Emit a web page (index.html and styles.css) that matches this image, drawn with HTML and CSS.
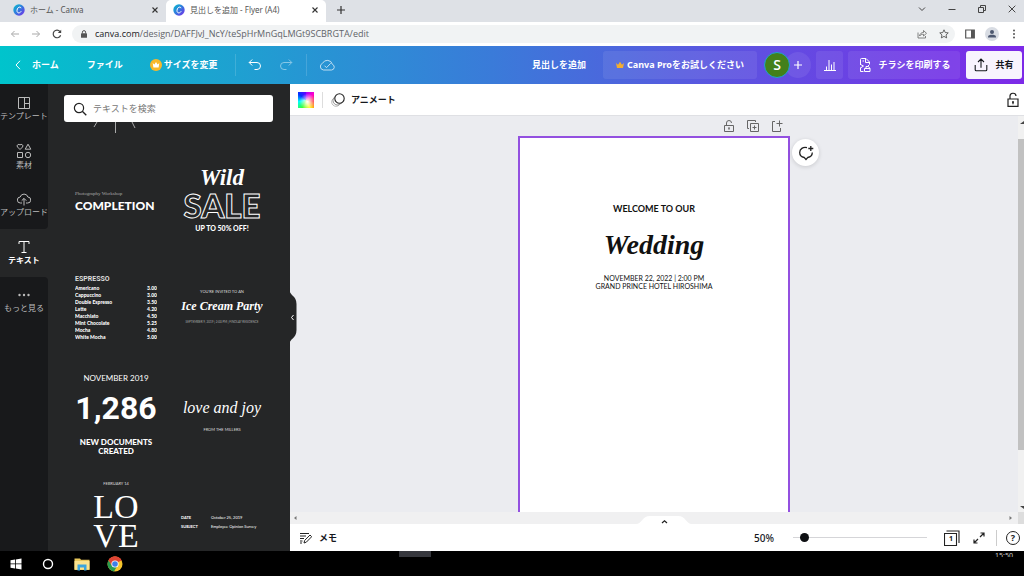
FILE: index.html
```html
<!DOCTYPE html>
<html lang="ja">
<head>
<meta charset="utf-8">
<title>見出しを追加 - Flyer (A4)</title>
<link rel="stylesheet" href="styles.css">
</head>
<body>
<div class="screen">
  <div class="tabs">
    <div class="tab">
      <svg class="fav" viewBox="0 0 12 12"><defs><linearGradient id="cg" x1="0" y1="0" x2="1" y2="1"><stop offset="0" stop-color="#00c4cc"/><stop offset=".55" stop-color="#3a6fe0"/><stop offset="1" stop-color="#7d2ae8"/></linearGradient></defs><circle cx="6" cy="6" r="5.7" fill="url(#cg)"/><path d="M8 4.2C7.8 2.9 6.300 2.700 5.200 3.700C3.800 5 3.500 7.800 4.900 8.700C6 9.300 7.400 8.600 8.200 7.300" fill="none" stroke="#fff" stroke-width="1"/></svg>
      <span class="tab-title">ホーム - Canva</span>
      <button class="plain" aria-label="タブを閉じる"><svg class="i6" viewBox="0 0 6 6"><path d="M.5.500l5 5M5.500.500l-5 5" stroke="#333" stroke-width="1.100"/></svg></button>
    </div>
    <div class="tab tab-on">
      <svg class="fav" viewBox="0 0 12 12"><circle cx="6" cy="6" r="5.700" fill="url(#cg)"/><path d="M8 4.200C7.800 2.900 6.300 2.700 5.200 3.700C3.800 5 3.500 7.800 4.900 8.700C6 9.300 7.400 8.600 8.200 7.300" fill="none" stroke="#fff" stroke-width="1"/></svg>
      <span class="tab-title">見出しを追加 - Flyer (A4)</span>
      <button class="plain" aria-label="タブを閉じる"><svg class="i6" viewBox="0 0 6 6"><path d="M.5.500l5 5M5.500.500l-5 5" stroke="#333" stroke-width="1.100"/></svg></button>
    </div>
    <button class="plain new-tab" aria-label="新しいタブ"><svg class="i8" viewBox="0 0 8 8"><path d="M4 0v8M0 4h8" stroke="#333" stroke-width="1.200"/></svg></button>
    <div class="win">
      <svg class="i8" viewBox="0 0 8 8"><path d="M1 2.500l3 3 3-3" class="ln"/></svg>
      <svg class="i8" viewBox="0 0 8 8"><path d="M.5 4.500h7" class="ln"/></svg>
      <svg class="i8" viewBox="0 0 8 8"><path d="M.5 2.500h5v5h-5zM2.500 2.500V.500h5v5H5.500" class="ln"/></svg>
      <svg class="i8" viewBox="0 0 8 8"><path d="M.7.700l6.600 6.600M7.300.700L.7 7.300" class="ln"/></svg>
    </div>
  </div>

  <div class="address">
    <div class="nav">
      <svg class="i10 faint" viewBox="0 0 10 10"><path d="M9 5H1.500M4.500 2L1.500 5l3 3" class="ln"/></svg>
      <svg class="i10 faint" viewBox="0 0 10 10"><path d="M1 5h7.500M5.500 2l3 3-3 3" class="ln"/></svg>
      <svg class="i10" viewBox="0 0 10 10"><path d="M8.600 6.200A3.800 3.800 0 1 1 8 2.600" fill="none" stroke="#444" stroke-width="1.200"/><path d="M9.200.700v3.400H5.800z" fill="#444"/></svg>
    </div>
    <div class="omni">
      <svg class="i8" viewBox="0 0 8 8"><rect x="1" y="3.200" width="6" height="4.600" rx=".6" fill="#555"/><path d="M2.400 3.500V2.200a1.600 1.600 0 0 1 3.200 0v1.300" fill="none" stroke="#555"/></svg>
      <span class="url"><b>canva.com</b>/design/DAFFJvJ_NcY/teSpHrMnGqLMGt9SCBRGTA/edit</span>
      <svg class="i10" viewBox="0 0 10 10"><path d="M1 3.500V9h7.500V7M2.500 7C3 4.500 4.500 3.500 6.500 3.500V1.500L9.500 4.300 6.500 7V5.300C4.800 5.300 3.500 5.700 2.500 7z" fill="none" stroke="#666" stroke-width=".8"/></svg>
      <svg class="i10 star" viewBox="0 0 10 10"><path d="M5 .8l1.250 2.750 3 .35-2.200 2.050.6 2.950L5 7.400 2.350 8.900l.6-2.950L.75 3.900l3-.35z" fill="none" stroke="#555" stroke-width=".9"/></svg>
    </div>
    <svg class="i10" viewBox="0 0 10 10"><path d="M.7 1h8.600v8H.7z" fill="none" stroke="#555" stroke-width="1.200"/><path d="M6 1h3.300v8H6z" fill="#555"/></svg>
    <svg class="i14" viewBox="0 0 14 14"><circle cx="7" cy="7" r="7" fill="#d8dce3"/><circle cx="7" cy="5" r="2" fill="#4d5870"/><path d="M3 10.500V9.600C3 8.300 5 7.800 7 7.800s4 .5 4 1.800v.9z" fill="#4d5870"/></svg>
    <svg class="i10" viewBox="0 0 10 10" fill="#555"><circle cx="5" cy="1.500" r="1"/><circle cx="5" cy="5" r="1"/><circle cx="5" cy="8.500" r="1"/></svg>
  </div>

  <header class="top">
    <button class="hb home"><svg class="back" viewBox="0 0 6 10"><path d="M5 .8L1 5l4 4.200" class="wl"/></svg>ホーム</button>
    <button class="hb file">ファイル</button>
    <button class="hb resize"><svg class="i12" viewBox="0 0 12 12"><circle cx="6" cy="6" r="6" fill="#f8b82b"/><path d="M2.700 4l1.700 1.500L6 3l1.600 2.500L9.300 4l-.7 4.500H3.400z" fill="#fff"/></svg>サイズを変更</button>
    <span class="sep"></span>
    <button class="hb undo" aria-label="元に戻す"><svg class="i14" viewBox="0 0 14 14"><path d="M4.200 1.500L1.200 4.500l3 3M1.200 4.500H9a3.500 3.500 0 0 1 0 7H6.500" class="wl"/></svg></button>
    <button class="hb redo" aria-label="やり直す"><svg class="i14" viewBox="0 0 14 14"><path d="M9.800 1.500l3 3-3 3M12.800 4.500H5a3.500 3.500 0 0 0 0 7h2.500" class="wl"/></svg></button>
    <span class="sep"></span>
    <button class="hb cloud" aria-label="保存済み"><svg class="i16" viewBox="0 0 16 16"><path d="M4.500 13h8a2.900 2.900 0 0 0 .9-5.600A5.300 5.300 0 0 0 3.500 6.300 3.500 3.500 0 0 0 4.500 13zM5.500 8.700l2 2 4.200-4.400" class="wl"/></svg></button>
    <span class="grow"></span>
    <button class="hb doc">見出しを追加</button>
    <button class="hb box pro"><svg class="i8" viewBox="0 0 8 8"><path d="M0 2l2 1.700L4 .7l2 3L8 2l-1 5H1z" fill="#f3ad30"/></svg>Canva Proをお試しください</button>
    <div class="people"><span class="avatar">S</span><button class="add" aria-label="メンバーを追加"><svg class="i8" viewBox="0 0 8 8"><path d="M4 0v8M0 4h8" fill="none" stroke="#fff" stroke-width="1.200"/></svg></button></div>
    <button class="hb box chart" aria-label="インサイト"><svg class="i14" viewBox="0 0 14 14"><path d="M1 12.500h12M3.500 12.500v-4M6 12.500V2M8.500 12.500V6.500M11 12.500V4" class="wl"/></svg></button>
    <button class="hb box print"><svg class="i14" viewBox="0 0 14 14"><path d="M2.500 13.500V9.500M2.500 7V1.500Q2.500.500 3.500.500H8L11.500 4v2.500M2.500 13.500h3M7.500.500v4h4M2.500 6.500l3 1.500-3 2M4.500 3h1.500" class="wl"/><path d="M6.500 13.500h5.500v-3h-5.500zM8 10.500v-2h2.500l1.500 2M9.500 8.500l1.500-1.500" class="wl"/></svg>チラシを印刷する</button>
    <button class="hb share"><svg class="i14" viewBox="0 0 14 14"><path d="M1.200 7v4.700q0 1 1 1h9.600q1 0 1-1V7M7 9.800V1.200M4 4l3-3 3 3" fill="none" stroke="#16181d" stroke-width="1.100"/></svg>共有</button>
  </header>

  <div class="work">
    <nav class="rail">
      <div class="rail-dark rail-top">
        <button class="ri"><svg class="i14" viewBox="0 0 14 14"><path d="M1.500 1.500h11v11h-11zM7.500 1.500v11M7.500 7.500h5" class="rl"/></svg>テンプレート</button>
        <button class="ri"><svg class="i16" viewBox="0 0 16 16"><path d="M4 6.500L1.500 4A1.600 1.600 0 0 1 4 2a1.600 1.600 0 0 1 2.500 2zM12 1.200l2.800 5H9.200zM1.500 9.500h5v5h-5z" class="rl"/><circle cx="12" cy="12" r="2.700" class="rl"/></svg>素材</button>
        <button class="ri"><svg class="i14" viewBox="0 0 14 14"><path d="M5 11H3.500a3 3 0 0 1-.3-6 4 4 0 0 1 7.700 0 3 3 0 0 1-.3 6H9M7 13.500V6.500M4.700 8.700L7 6.400l2.300 2.300" class="rl"/></svg>アップロード</button>
      </div>
      <button class="ri ri-on"><svg class="i14" viewBox="0 0 14 14"><path d="M2 4V1.500h10V4M7 1.500v11M4.500 12.500h5" class="rl"/></svg>テキスト</button>
      <div class="rail-dark rail-rest">
        <button class="ri"><svg class="i14" viewBox="0 0 14 14" fill="#bbb"><circle cx="2.500" cy="7" r="1.200"/><circle cx="7" cy="7" r="1.200"/><circle cx="11.500" cy="7" r="1.200"/></svg>もっと見る</button>
      </div>
    </nav>

    <aside class="panel">
      <label class="search"><svg class="i14" viewBox="0 0 14 14"><circle cx="6" cy="6" r="4.600" fill="none" stroke="#222" stroke-width="1.200"/><path d="M9.300 9.300l4 4" stroke="#222" stroke-width="1.300"/></svg><input type="text" placeholder="テキストを検索" aria-label="テキストを検索"></label>
      <svg class="rays" viewBox="0 0 44 12"><path d="M4 0L1 5M22.500 0v11M39 0l3 6" fill="none" stroke="#aaa" stroke-width="1"/></svg>
      <div class="cards">
        <div class="card c-comp"><small>Photography Workshop</small><strong>COMPLETION</strong></div>
        <div class="card c-sale"><em>Wild</em><strong>SALE</strong><small>UP TO 50% OFF!</small></div>
        <div class="card c-menu"><h3>ESPRESSO</h3>
          <ul>
            <li><span>Americano</span><span>3.00</span></li><li><span>Cappuccino</span><span>3.00</span></li><li><span>Double Espresso</span><span>3.50</span></li><li><span>Latte</span><span>4.20</span></li><li><span>Macchiato</span><span>4.50</span></li><li><span>Mint Chocolate</span><span>5.25</span></li><li><span>Mocha</span><span>4.80</span></li><li><span>White Mocha</span><span>5.00</span></li>
          </ul>
        </div>
        <div class="card c-ice"><small>YOU'RE INVITED TO AN</small><em>Ice Cream Party</em><small class="tiny">SEPTEMBER 9, 2019 | 2:00 PM | FINDLAY RESIDENCE</small></div>
        <div class="card c-num"><span>NOVEMBER 2019</span><strong>1,286</strong><b>NEW DOCUMENTS<br>CREATED</b></div>
        <div class="card c-joy"><em>love and joy</em><small>FROM THE MILLERS</small></div>
        <div class="card c-love"><small>FEBRUARY 14</small><strong>LO<br>VE</strong></div>
        <div class="card c-date"><b>DATE</b><span>October 25, 2019</span><b>SUBJECT</b><span>Employee Opinion Survey</span></div>
      </div>
      <button class="handle" aria-label="パネルを閉じる"><svg viewBox="0 0 8 58"><path d="M0 0C0 8 7.500 7 7.500 16v26C7.500 51 0 50 0 58z" fill="#252627"/><path d="M4.500 27L2.500 29.500l2 2.500" fill="none" stroke="#fff" stroke-width="1"/></svg></button>
    </aside>

    <main class="editor">
      <div class="tools">
        <button class="swatch" aria-label="背景色"></button>
        <span class="tsep"></span>
        <button class="anim"><svg class="i14" viewBox="0 0 14 14" fill="none"><circle cx="5" cy="9" r="4.300" stroke="#aaa" stroke-width=".8"/><circle cx="6.500" cy="7.500" r="4.500" stroke="#777" stroke-width=".8" fill="#fff"/><circle cx="8.500" cy="5.500" r="4.700" stroke="#222" stroke-width="1.100" fill="#fff"/></svg>アニメート</button>
        <span class="grow"></span>
        <button class="plain" aria-label="ロック"><svg class="i16" viewBox="0 0 16 16"><path d="M3 7h10v7.300H3zM5 7V4.500a3 3 0 0 1 6-.5M8 10v2.200" fill="none" stroke="#222" stroke-width="1.200"/><circle cx="8" cy="10" r="1" fill="#222"/></svg></button>
      </div>
      <div class="stage">
        <div class="canvas">
          <div class="sheet-col">
            <div class="sheet-acts">
              <button class="plain" aria-label="ページをロック"><svg class="i12" viewBox="0 0 12 12"><path d="M1.500 5.500h9v6h-9zM3.500 5.500V3a2.500 2.500 0 0 1 5 0M6 8v1.800" class="gl"/><circle cx="6" cy="8" r=".8" fill="#555"/></svg></button>
              <button class="plain" aria-label="ページを複製"><svg class="i12" viewBox="0 0 12 12"><path d="M3.500 3.500h8v8h-8zM2 8.500H.500v-8h8V2M7.500 5.500v4M5.500 7.500h4" class="gl"/></svg></button>
              <button class="plain" aria-label="ページを追加"><svg class="i12" viewBox="0 0 12 12"><path d="M4 1.500H1.500v10h8V8M8.500.500v6M5.500 3.500h6" class="gl"/></svg></button>
            </div>
            <div class="sheet">
              <p class="s1">WELCOME TO OUR</p>
              <p class="s2">Wedding</p>
              <p class="s3">NOVEMBER 22, 2022 | 2:00 PM<br>GRAND PRINCE HOTEL HIROSHIMA</p>
            </div>
            <button class="comment" aria-label="コメントを追加"><svg class="i16" viewBox="0 0 16 16"><path d="M9 2.700C5 1.700 1.700 4 1.700 7.500c0 2.700 2 4.500 4.600 5L8 14.500l1.700-2c2.700-.5 4.600-2.300 4.600-5M12.800 1v5M10.300 3.500h5" fill="none" stroke="#222" stroke-width="1.300"/></svg></button>
          </div>
        </div>
        <div class="vbar"><svg viewBox="0 0 6 8"><path d="M2 6l4-3v3z" fill="#444"/></svg><span class="thumb"></span><svg viewBox="0 0 6 8"><path d="M2 2l4 3V2z" fill="#444"/></svg></div>
      </div>
      <div class="hbar">
        <svg class="i6" viewBox="0 0 6 6"><path d="M4.500 1v4L2 3z" fill="#777"/></svg>
        <button class="pull" aria-label="ページを表示"><svg viewBox="0 0 56 8"><path d="M0 8C6 8 6 0 14 0H42C50 0 50 8 56 8z" fill="#fff"/><path d="M26 7l2.500-2.300L31 7" fill="none" stroke="#222" stroke-width="1.200"/></svg></button>
        <svg class="i6" viewBox="0 0 6 6"><path d="M1.500 1v4L4 3z" fill="#777"/></svg>
        <span class="corner"></span>
      </div>
      <div class="foot">
        <button class="memo"><svg class="i12" viewBox="0 0 12 12"><path d="M0 1.500h9M0 4h6M0 6.500h4M0 9h2.500M0 11h2M4 11l.7-2.600L10 3l1.700 1.700-5.300 5.400z" fill="none" stroke="#222" stroke-width="1"/></svg>メモ</button>
        <span class="grow"></span>
        <label class="zoom" for="z">50%</label>
        <input id="z" class="slider" type="range" min="10" max="700" value="50">
        <button class="plain pages" aria-label="ページ数 1"><svg class="i16" viewBox="0 0 16 16"><path d="M.5 3.500h12v12H.500zM2.500 1h12.500v12" fill="none" stroke="#222" stroke-width="1.100"/></svg><span>1</span></button>
        <button class="plain full" aria-label="全画面"><svg class="i12" viewBox="0 0 12 12"><path d="M7 5l4-4M7.500 1H11v3.500M5 7l-4 4M1 7.500V11h3.500" fill="none" stroke="#222" stroke-width="1.200"/></svg></button>
        <span class="fsep"></span>
        <button class="help" aria-label="ヘルプ">?</button>
      </div>
    </main>
  </div>

  <footer class="taskbar">
    <div class="apps">
      <svg class="i12" viewBox="0 0 12 12" fill="#fff"><path d="M.5 2.200L5 1.500v4H.5zM5.800 1.400L11.500.500v5H5.800zM.5 6.300H5v4.200L.5 9.800zM5.800 6.300h5.700v5.200l-5.700-.9z"/></svg>
      <svg class="i12" viewBox="0 0 12 12"><circle cx="6" cy="6" r="4.500" fill="none" stroke="#fff" stroke-width="1.400"/></svg>
      <svg class="i16" viewBox="0 0 16 16"><path d="M.5 2.500H6l1 1.300h8.500V14H.5z" fill="#e9c75b"/><path d="M.5 5h15v8.500H.5z" fill="#fbe38e"/><path d="M3.500 14.500V8.500h9v6h-2.500v-3H6v3z" fill="#3ca5dd"/></svg>
      <svg class="i16" viewBox="0 0 16 16"><circle cx="8" cy="8" r="7.500" fill="#f6c52c"/><path d="M8 8L1.500 4.250A7.500 7.500 0 0 1 14.500 4.250z" fill="#df4434"/><path d="M1.500 4.250A7.500 7.500 0 0 0 7 15.400L10.500 9.500 8 8 5 9.500z" fill="#289c4e"/><path d="M1.500 4.250L5 9.700 8 4.500h6.600A7.500 7.500 0 0 0 1.500 4.250z" fill="#df4434"/><circle cx="8" cy="8" r="3.600" fill="#fff"/><circle cx="8" cy="8" r="2.800" fill="#3e7fe8"/></svg>
    </div>
    <div class="tray"><span class="active-app"></span><span class="clock">15:50</span></div>
  </footer>
</div>
</body>
</html>
```
FILE: styles.css
```css
* { box-sizing: border-box; }
body { margin: 0; font-family: "Noto Sans", "Noto Sans CJK JP", sans-serif; font-size: 9px; line-height: 12px; color: #16181d; }
button { font: inherit; color: inherit; border: 0; padding: 0; background: none; display: flex; align-items: center; white-space: nowrap; }
svg { display: block; flex: none; }
p, h3, ul { margin: 0; padding: 0; list-style: none; }
.screen { height: 100vh; display: flex; flex-direction: column; overflow: hidden; background: #fff; }
.grow { flex: 1; }
.i6 { width: 6px; height: 6px; }
.i8 { width: 8px; height: 8px; }
.i10 { width: 10px; height: 10px; }
.i12 { width: 12px; height: 12px; }
.i14 { width: 14px; height: 14px; }
.i16 { width: 16px; height: 16px; }
.ln { fill: none; stroke: #444; stroke-width: 1; }
.wl { fill: none; stroke: #fff; stroke-width: 1; }
.rl { fill: none; stroke: #bbb; stroke-width: 1; }
.gl { fill: none; stroke: #666; stroke-width: 1; }

.tabs { flex: none; height: 22px; background: #dee1e6; display: flex; align-items: center; }
.tab { width: 166px; height: 22px; display: flex; align-items: center; gap: 5px; padding: 0 8px 2px 13px; color: #555; font-size: 8px; }
.tab-on { width: 160px; padding: 0 8px 2px 7px; background: #fff; border-radius: 5px 5px 0 0; }
.tab-title { flex: 1; white-space: nowrap; }
.fav { width: 12px; height: 12px; }
.new-tab { padding: 0 0 2px 11px; }
.win { margin-left: auto; display: flex; gap: 22px; padding: 0 8px 4px 0; }
.address { flex: none; height: 24px; display: flex; align-items: center; gap: 10px; padding: 0 5px 0 10px; }
.nav { display: flex; gap: 11px; }
.faint { opacity: .45; }
.omni { flex: 1; height: 18px; border-radius: 9px; background: #f1f3f4; display: flex; align-items: center; gap: 12px; padding: 0 6px 0 8px; color: #5f6368; }
.url { flex: 1; font-family: "Open Sans", sans-serif; margin-left: -5px; }
.url b { font-weight: 400; color: #202124; }

.top { flex: none; height: 38px; display: flex; align-items: center; color: #fff; background: linear-gradient(90deg, #00c4cc 0%, #1ba5d0 20%, #3a7bd9 48%, #5b55e0 70%, #7d2ae8 100%); padding: 0 2px 0 15px; }
.hb { font-weight: 700; height: 28px; }
.home { gap: 11px; }
.back { width: 6px; height: 10px; }
.file { margin-left: 28px; }
.resize { margin-left: 27px; gap: 2px; }
.sep { width: 1px; height: 22px; background: rgba(255,255,255,.15); margin: 0 12px; }
.resize + .sep { margin-left: 18px; }
.redo { margin-left: 17px; margin-right: 1px; opacity: .45; }
.cloud { opacity: .7; }
.box { background: rgba(255,255,255,.08); border-radius: 3px; }
.pro { margin-left: 17px; width: 154px; justify-content: center; gap: 3px; }
.people { display: flex; align-items: center; margin: 0 5px 0 7px; }
.avatar { width: 26px; height: 26px; border-radius: 50%; border: 1px solid #1fa3cf; background: #43801b; font-size: 14px; line-height: 24px; text-align: center; font-family: "Open Sans", sans-serif; z-index: 1; font-weight: 600; }
.add { width: 26px; height: 26px; border-radius: 50%; background: rgba(255,255,255,.08); justify-content: center; margin-left: -5px; }
.chart { width: 27px; justify-content: center; }
.print { width: 112px; margin: 0 6px 0 5px; justify-content: center; gap: 7px; }
.share { width: 56px; background: #f8f4fe; color: #16181d; border-radius: 3px; justify-content: center; gap: 7px; }

.work { flex: 1; min-height: 0; display: flex; background: #252627; }
.rail { width: 48px; display: flex; flex-direction: column; }
.rail-dark { background: #18191b; }
.rail-top { border-radius: 0 0 4px 0; padding-top: 1px; }
.rail-rest { flex: 1; border-radius: 0 4px 0 0; }
.ri { width: 100%; height: 48px; flex-direction: column; justify-content: center; color: #bbb; font-size: 8px; line-height: 12px; }
.ri-on { color: #fff; font-weight: 700; }
.ri-on .rl { stroke: #fff; }

.panel { width: 242px; position: relative; color: #fff; display: flex; flex-direction: column; padding-top: 11px; min-height: 0; }
.search { flex: none; height: 27px; margin: 0 17px 0 16px; background: #fff; border-radius: 3px; display: flex; align-items: center; gap: 6px; padding: 0 9px; }
.search input { flex: 1; min-width: 0; border: 0; outline: 0; font: inherit; padding: 0; background: none; }
.search input::placeholder { color: #777; }
.rays { width: 44px; height: 12px; margin: 0 0 16px 45px; }
.cards { flex: 1; min-height: 0; overflow: hidden; display: grid; grid-template-columns: 1fr 1fr; grid-auto-rows: 105px; column-gap: 24px; padding: 0 27px; }
.card { min-width: 0; display: flex; flex-direction: column; align-items: center; justify-content: center; text-align: center; white-space: nowrap; font-family: Lato, sans-serif; }
.card small { font-size: 4px; line-height: 6px; color: #ddd; }
.c-comp { align-items: flex-start; }
.card.c-comp small { font-family: "Liberation Serif", serif; font-size: 5px; line-height: 7px; color: #aaa; }
.c-comp strong { font-size: 12px; line-height: 18px; font-weight: 900; }
.c-sale { padding-bottom: 4px; }
.c-sale em { font-size: 23px; line-height: 26px; font-family: "Liberation Serif", serif; font-weight: 700; }
.c-sale strong { font-size: 33px; line-height: 28px; font-weight: 900; color: transparent; -webkit-text-stroke: 1px #fff; }
.card.c-sale small { font-size: 7px; line-height: 18px; font-weight: 900; color: #fff; }
.c-menu { align-items: stretch; text-align: left; padding-bottom: 3px; }
.c-menu h3 { font: 700 7px/11px "Liberation Sans Narrow", Roboto, sans-serif; color: #ddd; }
.c-menu ul { height: 54px; overflow: hidden; }
.c-menu li { display: flex; justify-content: space-between; font-size: 5px; line-height: 7px; font-weight: 900; }
.c-ice em { font: italic 700 12px/22px "Liberation Serif", serif; }
.card.c-ice .tiny { font-size: 3px; line-height: 10px; color: #aaa; }
.c-num { padding-top: 3px; }
.c-num span { font-size: 8px; line-height: 10px; }
.c-num strong { font: 700 32px/50px "Liberation Sans Narrow", Roboto, sans-serif; }
.c-num b { font-size: 8px; line-height: 9px; font-weight: 900; padding-top: 5px; }
.c-joy { padding-top: 9px; }
.c-joy em { font: italic 16px/26px "Liberation Serif", serif; }
.card.c-joy small { line-height: 18px; }
.c-love { padding-bottom: 5px; }
.c-love strong { font: 400 34px/29px "Liberation Serif", serif; padding-top: 5px; }
.c-date { display: grid; grid-template-columns: 30px 1fr; align-content: center; text-align: left; font-size: 4px; line-height: 9px; justify-items: start; padding-top: 8px; }
.handle { position: absolute; left: 100%; top: 204px; margin-left: -1px; }
.handle svg { width: 8px; height: 58px; }

.editor { flex: 1; min-width: 0; display: flex; flex-direction: column; background: #fff; }
.tools { flex: none; height: 32px; display: flex; align-items: center; padding: 0 3px 0 8px; border-bottom: 1px solid #dfe0e4; }
.swatch { width: 16px; height: 16px; background: radial-gradient(circle at 60% 60%, #fff 0, transparent 60%), conic-gradient(from 0deg, #90f, #f0c, #f22, #ff0, #3f3, #0ff, #03f, #60f); }
.tsep { width: 1px; height: 16px; background: #ddd; margin: 0 8px; }
.anim { font-weight: 700; gap: 6px; }
.stage { flex: 1; min-height: 0; display: flex; background: #ebecf0; }
.canvas { flex: 1; display: flex; justify-content: center; overflow: hidden; }
.sheet-col { position: relative; width: 272px; display: flex; flex-direction: column; }
.sheet-acts { height: 20px; flex: none; display: flex; justify-content: flex-end; align-items: center; gap: 12px; padding-right: 7px; }
.sheet { flex: 1; background: #fff; border: 2px solid #9350e0; border-bottom: 0; text-align: center; padding-top: 64px; font-family: Lato, sans-serif; color: #111; }
.s1 { font-size: 9px; line-height: 14px; font-weight: 700; }
.s2 { font: italic 700 28px/50px "Liberation Serif", serif; padding: 4px 0; }
.s3 { font-size: 7px; line-height: 8px; }
.comment { position: absolute; left: 100%; top: 23px; margin-left: 2px; width: 27px; height: 27px; border-radius: 50%; background: #fff; justify-content: center; box-shadow: 0 1px 4px rgba(0,0,0,.15); }
.vbar { width: 6px; background: #f1f1f1; display: flex; flex-direction: column; padding-top: 2px; }
.vbar svg { width: 6px; height: 8px; }
.thumb { background: #c1c1c1; height: 79%; margin: 13px 0 auto; }
.hbar { flex: none; height: 12px; background: #f0f0f1; display: flex; align-items: center; padding-left: 2px; justify-content: space-between; }
.pull { align-self: flex-end; margin-left: auto; margin-right: -22px; }
.pull svg { width: 56px; height: 8px; }
.hbar .corner { width: 6px; height: 12px; background: #ddd; }
.hbar > .i6:nth-of-type(2) { margin-left: auto; margin-right: 4px; }
.foot { flex: none; height: 27px; display: flex; align-items: center; padding: 0 4px 0 10px; }
.memo { font-weight: 700; gap: 7px; }
.zoom { font-size: 10px; font-weight: 500; }
.slider { appearance: none; width: 134px; height: 12px; margin: 0 17px 0 19px; background: linear-gradient(#d5d5d8, #d5d5d8) center / 100% 1px no-repeat; }
.slider::-webkit-slider-thumb { appearance: none; width: 9px; height: 9px; border-radius: 50%; background: #0e1013; }
.pages { display: grid; }
.pages > * { grid-area: 1 / 1; }
.pages span { font-size: 7px; line-height: 8px; font-weight: 700; text-align: left; padding: 2px 0 0 5px; }
.full { margin: 0 11px 0 13px; }
.fsep { width: 1px; height: 16px; background: #ccc; margin-right: 9px; }
.help { width: 14px; height: 14px; border: 1px solid #222; border-radius: 50%; font-weight: 700; font-size: 9px; justify-content: center; }

.taskbar { flex: none; height: 25px; background: #000; display: flex; align-items: flex-start; justify-content: space-between; }
.apps { display: flex; align-items: center; gap: 20px; padding: 4px 0 0 10px; height: 22px; }
.apps svg:last-child { margin-left: -3px; }
.tray { flex: 0 0 61%; height: 6px; overflow: hidden; display: flex; justify-content: space-between; padding-right: 11px; }
.active-app { width: 32px; background: #36373d; }
.clock { color: #ccc; font-size: 7px; line-height: 10px; }
```
